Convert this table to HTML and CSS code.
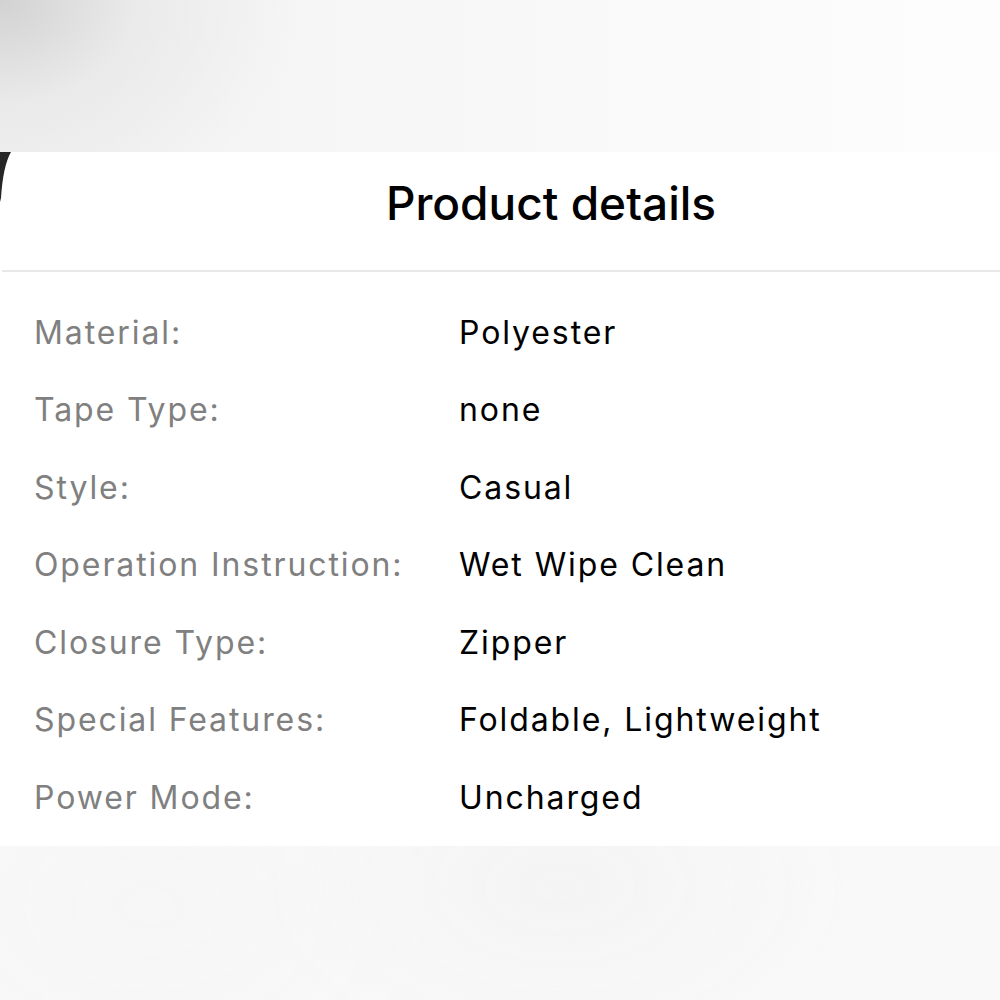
FILE: index.html
```html
<!DOCTYPE html>
<html lang="en">
<head>
  <meta charset="UTF-8">
  <title>Product details</title>
  <link rel="stylesheet" href="styles.css">
</head>
<body>

<div class="page">
  <!-- backdrop above the sheet -->
  <div class="backdrop-top"></div>

  <div class="sheet-wrap">
    <svg class="corner" width="14" height="50" viewBox="0 0 14 50">
      <path d="M0 0 H11 Q3 14 1 46 L0 50 Z" fill="#262626"/>
    </svg>

    <div class="sheet">
      <!-- Header -->
      <div class="sheet-header">
        <h1>Product details</h1>
      </div>

      <!-- Details -->
      <div class="detail-list">
        <div class="detail-row">
          <span class="detail-label">Material:</span>
          <span class="detail-value">Polyester</span>
        </div>
        <div class="detail-row">
          <span class="detail-label">Tape Type:</span>
          <span class="detail-value">none</span>
        </div>
        <div class="detail-row">
          <span class="detail-label">Style:</span>
          <span class="detail-value">Casual</span>
        </div>
        <div class="detail-row">
          <span class="detail-label">Operation Instruction:</span>
          <span class="detail-value">Wet Wipe Clean</span>
        </div>
        <div class="detail-row">
          <span class="detail-label">Closure Type:</span>
          <span class="detail-value">Zipper</span>
        </div>
        <div class="detail-row">
          <span class="detail-label">Special Features:</span>
          <span class="detail-value">Foldable, Lightweight</span>
        </div>
        <div class="detail-row">
          <span class="detail-label">Power Mode:</span>
          <span class="detail-value">Uncharged</span>
        </div>
      </div>
    </div>
  </div>

  <div class="backdrop-bottom"></div>
</div>

</body>
</html>
```

FILE: styles.css
```css
* {
  box-sizing: border-box;
  font-family: Inter, "Liberation Sans", Arial, sans-serif;
}
body {
  margin: 0;
  background-color: #fff;
}
.page {
  width: 1000px;
  height: 1000px;
  overflow: hidden;
  display: flex;
  flex-direction: column;
}
.backdrop-top {
  height: 152px;
  background:
    radial-gradient(ellipse 300px 230px at 0 0, #d2d2d2 0%, rgba(228,228,228,0.6) 45%, rgba(255,255,255,0) 100%),
    linear-gradient(90deg, #f2f2f2 0%, #f8f8f8 50%, #fdfdfd 100%);
}
.sheet-wrap {
  position: relative;
}
.corner {
  position: absolute;
  left: 0;
  top: 0;
}
.sheet {
  background-color: #fff;
  margin-left: 2px;
  border-top-left-radius: 40px;
}
.sheet-header {
  height: 120px;
  display: flex;
  align-items: center;
  justify-content: center;
  padding-left: 100px;
  padding-bottom: 16px;
  border-bottom: 2px solid #e8e8e8;
}
.sheet-header h1 {
  margin: 0;
  font-size: 46px;
  font-weight: 500;
  color: #000;
  line-height: 1;
}

/* rows */
.detail-list {
  padding: 22px 0 9px 32px;
}
.detail-row {
  display: flex;
  height: 77.5px;
  align-items: center;
  font-size: 32px;
  letter-spacing: 1.9px;
  line-height: 1;
}
.detail-label {
  width: 425px;
  color: #808080;
}
.detail-value {
  color: #000;
}

.backdrop-bottom {
  flex: 1;
  background:
    radial-gradient(ellipse 300px 180px at 560px 40px, #f4f4f4 0%, rgba(246,246,246,0) 100%),
    radial-gradient(ellipse 300px 200px at 150px 60px, #f6f6f6 0%, rgba(246,246,246,0) 100%),
    #f9f9f9;
}
```
